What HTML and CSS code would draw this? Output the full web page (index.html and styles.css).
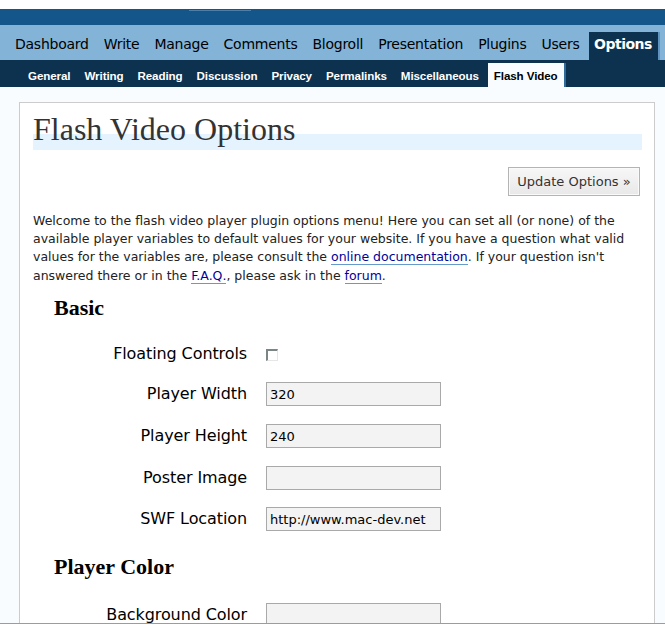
FILE: index.html
```html
<!DOCTYPE html>
<html>
<head>
<meta charset="utf-8">
<title>Flash Video Options</title>
<link rel="stylesheet" href="styles.css">
</head>
<body>
<div class="page">
  <div class="topgap"></div>
  <div class="header"><span class="hl"></span></div>
  <ul class="adminmenu">
    <li><a href="#">Dashboard</a></li>
    <li><a href="#">Write</a></li>
    <li><a href="#">Manage</a></li>
    <li><a href="#">Comments</a></li>
    <li><a href="#">Blogroll</a></li>
    <li><a href="#">Presentation</a></li>
    <li><a href="#">Plugins</a></li>
    <li><a href="#">Users</a></li>
    <li><a href="#" class="current">Options</a></li>
  </ul>
  <ul class="submenu">
    <li><a href="#">General</a></li>
    <li><a href="#">Writing</a></li>
    <li><a href="#">Reading</a></li>
    <li><a href="#">Discussion</a></li>
    <li><a href="#">Privacy</a></li>
    <li><a href="#">Permalinks</a></li>
    <li><a href="#">Miscellaneous</a></li>
    <li><a href="#" class="current">Flash Video</a></li>
  </ul>
  <div class="content">
    <div class="wrap">
      <h2>Flash Video Options</h2>
      <div class="submit"><button type="button">Update Options »</button></div>
      <p class="intro">Welcome to the flash video player plugin options menu! Here you can set all (or none) of the<br>available player variables to default values for your website. If you have a question what valid<br>values for the variables are, please consult the <a href="#">online documentation</a>. If your question isn't<br>answered there or in the <a href="#">F.A.Q.</a>, please ask in the <a href="#">forum</a>.</p>
      <h3>Basic</h3>
      <div class="row r1"><label>Floating Controls</label><span class="check"></span></div>
      <div class="row r2"><label>Player Width</label><input type="text" value="320"></div>
      <div class="row r3"><label>Player Height</label><input type="text" value="240"></div>
      <div class="row r3"><label>Poster Image</label><input type="text" value=""></div>
      <div class="row r4"><label>SWF Location</label><input type="text" value="http://www.mac-dev.net"></div>
      <h3 class="h3b">Player Color</h3>
      <div class="row r5"><label>Background Color</label><input type="text" value=""></div>
    </div>
  </div>
</div>
</body>
</html>
```
FILE: styles.css
```css
html, body {
  margin: 0;
  padding: 0;
  background: #fff;
}
body {
  font-family: "DejaVu Sans", "Noto Sans", sans-serif;
  color: #222;
}
.page {
  height: 623px;
  overflow: hidden;
  border-bottom: 1px solid #9c9c9c;
  background: #f9fcfe;
}
.topgap {
  height: 9px;
  background: #fff;
}
.header {
  height: 16px;
  box-sizing: border-box;
  padding-top: 1px;
  background: #14568a;
}
.hl {
  display: block;
  margin-left: 189px;
  width: 62px;
  height: 1px;
  background: #4a80ae;
}
.adminmenu {
  display: flex;
  list-style: none;
  margin: 0;
  padding: 7px 0 0 7.5px;
  height: 35px;
  box-sizing: border-box;
  background: #83b4d8;
}
.adminmenu a {
  display: block;
  padding: 4px 7.5px 7px;
  line-height: 17px;
  font-size: 14px;
  letter-spacing: -0.25px;
  color: #000;
  text-decoration: none;
}
.adminmenu a.current {
  margin-left: 2px;
  padding: 4px 6px 7px 5px;
  background: #0d324f;
  color: #fff;
  font-weight: bold;
  letter-spacing: -0.5px;
  border-right: 2px solid #5f94c0;
}
.submenu {
  display: flex;
  list-style: none;
  margin: 0;
  padding: 3px 0 0 21px;
  height: 27px;
  box-sizing: border-box;
  background: #0d324f;
}
.submenu a {
  display: block;
  padding: 6px 7px 4px;
  line-height: 14px;
  font-family: "Liberation Sans", Arial, sans-serif;
  font-weight: bold;
  font-size: 11.6px;
  letter-spacing: -0.1px;
  color: #fff;
  text-decoration: none;
}
.submenu a.current {
  margin-left: 2px;
  padding: 6px 6px 4px;
  background: #f9fcfe;
  color: #000;
  border-right: 2px solid #2f6a9c;
}
.content {
  padding: 15px 10px 0 19px;
}
.wrap {
  background: #fff;
  border: 1px solid #ccc;
  padding: 10px 12px 0 13px;
  height: 600px;
}
h2 {
  margin: 0;
  padding-bottom: 5px;
  font-family: "Liberation Serif", "Times New Roman", serif;
  font-weight: normal;
  font-size: 32px;
  line-height: 32px;
  color: #333;
  background: linear-gradient(to bottom, transparent 21px, #e5f3ff 21px);
}
.submit {
  display: flex;
  justify-content: flex-end;
  margin-top: 17px;
  padding-right: 2px;
}
.submit button {
  width: 132px;
  height: 29px;
  padding: 0;
  border: 1px solid #b4b4b4;
  box-shadow: inset 0 0 0 1px #fafafa;
  background: linear-gradient(to bottom, #f7f7f7, #e8e8e8);
  font-family: "DejaVu Sans", sans-serif;
  font-size: 13px;
  color: #333;
}
.intro {
  margin: 15.5px 0 0;
  font-size: 12.5px;
  line-height: 18.4px;
  white-space: nowrap;
  color: #222;
}
.intro a {
  color: #00019b;
  text-decoration: none;
  border-bottom: 1px solid #69c;
}
h3 {
  margin: 10px 0 0 21px;
  font-family: "Liberation Serif", "Times New Roman", serif;
  font-weight: bold;
  font-size: 22px;
  line-height: 26px;
  color: #000;
}
h3.h3b {
  margin-top: 23px;
}
.row {
  display: grid;
  grid-template-columns: 214px 175px;
  column-gap: 19px;
  align-items: center;
  height: 24px;
}
.r1 { margin-top: 21px; }
.r2 { margin-top: 16px; }
.r3 { margin-top: 18px; }
.r4 { margin-top: 17px; }
.r5 { margin-top: 23px; }
.row label {
  text-align: right;
  font-size: 16px;
  line-height: 24px;
  letter-spacing: -0.1px;
  color: #000;
}
.check {
  display: block;
  width: 12px;
  height: 12px;
  box-sizing: border-box;
  margin-top: 2px;
  border-top: 2px solid #7c8585;
  border-left: 2px solid #7c8585;
  border-right: 1px solid #e6e6e6;
  border-bottom: 1px solid #e6e6e6;
  background: #fff;
}
.row input {
  width: 175px;
  height: 24px;
  box-sizing: border-box;
  margin: 0;
  padding: 0 3px;
  border: 1px solid #a9a9a9;
  background: #f3f3f3;
  font-family: "DejaVu Sans", sans-serif;
  font-size: 13px;
  color: #000;
}
```
